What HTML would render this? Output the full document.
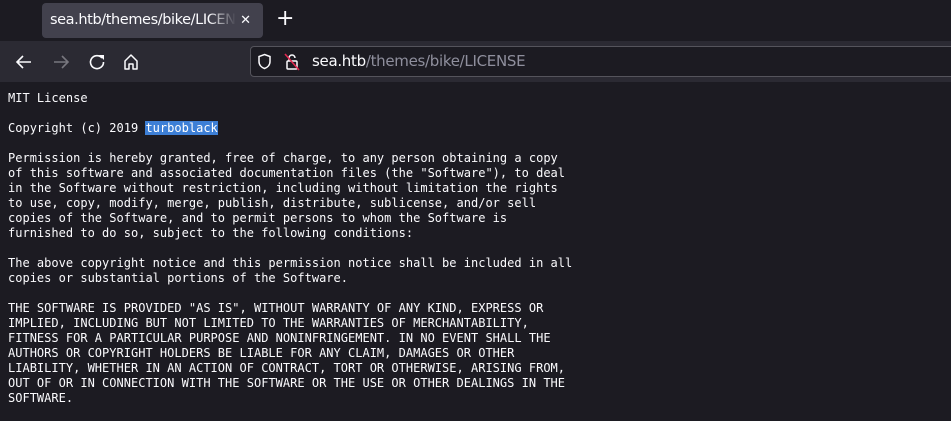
<!DOCTYPE html>
<html><head><meta charset="utf-8"><style>
*{margin:0;padding:0;box-sizing:border-box}
html,body{width:951px;height:421px;overflow:hidden;background:#1c1b22}
.tabs{position:absolute;left:0;top:0;width:951px;height:41px;background:#1c1b22}
.tab{position:absolute;left:42px;top:3px;width:221px;height:35px;background:#42414d;border-radius:4px;color:#fbfbfe;font:14.5px "DejaVu Sans","Liberation Sans",sans-serif;line-height:35px;padding-left:8px;white-space:nowrap;overflow:hidden}
.tab .t{display:inline-block;width:186px;overflow:hidden;letter-spacing:-0.4px;-webkit-mask-image:linear-gradient(to right,#000 85%,transparent)}
.tab .x{position:absolute;right:12px;top:0;color:#fbfbfe;font-size:13px}
.plus{position:absolute;left:276px;top:6px;color:#fbfbfe;font:22px "DejaVu Sans",sans-serif}
.bar{position:absolute;left:0;top:41px;width:951px;height:41px;background:#2b2a33}
.url{position:absolute;left:250px;top:46px;width:710px;height:31px;background:#1c1b22;border:1px solid #55545c;border-radius:4px}
.urltext{position:absolute;left:312px;top:52px;font:15px "DejaVu Sans","Liberation Sans",sans-serif;color:#fbfbfe;letter-spacing:-0.3px}
.urltext span{color:#8f8f9d}
svg{position:absolute}
pre{position:absolute;left:8px;top:91px;font:12.02px/15px "DejaVu Sans Mono","Liberation Mono",monospace;color:#fbfbfe}
.sel{background:#3d7fd6;color:#fff}
</style></head><body>
<div class="tabs"></div>
<div class="tab"><span class="t">sea.htb/themes/bike/LICENSE</span><span class="x">✕</span></div>
<div class="plus">+</div>
<div class="bar"></div>
<svg style="left:15px;top:54px" width="18" height="16" viewBox="0 0 18 16"><path d="M16 8H2M8 2L2 8l6 6" stroke="#fbfbfe" stroke-width="1.6" fill="none"/></svg>
<svg style="left:52px;top:54px" width="18" height="16" viewBox="0 0 18 16"><path d="M2 8h14M10 2l6 6-6 6" stroke="#78777f" stroke-width="1.6" fill="none"/></svg>
<svg style="left:88px;top:53px" width="18" height="18" viewBox="0 0 18 18"><path d="M14 5A6.5 6.5 0 1 0 15.5 9" stroke="#fbfbfe" stroke-width="1.6" fill="none"/><path d="M11 2h5v5z" fill="#fbfbfe"/></svg>
<svg style="left:123px;top:53px" width="16" height="17" viewBox="0 0 16 17"><path d="M2 8L8 2l6 6v8H10v-5H6v5H2z" stroke="#fbfbfe" stroke-width="1.5" fill="none" stroke-linejoin="round"/></svg>
<div class="url"></div>
<svg style="left:257px;top:53px" width="15" height="17" viewBox="0 0 15 17"><path d="M7.5 1.5L13 3.5v5c0 3.5-2.5 6-5.5 7-3-1-5.5-3.5-5.5-7v-5z" stroke="#fbfbfe" stroke-width="1.5" fill="none"/></svg>
<svg style="left:284px;top:53px" width="16" height="18" viewBox="0 0 16 18"><rect x="3" y="8" width="10" height="8" rx="1" stroke="#fbfbfe" stroke-width="1.5" fill="none"/><path d="M5 8V5a3 3 0 0 1 6 0" stroke="#fbfbfe" stroke-width="1.5" fill="none"/><path d="M1 1l14 16" stroke="#e22850" stroke-width="1.6"/></svg>
<div class="urltext">sea.htb<span>/themes/bike/LICENSE</span></div>
<pre>MIT License

Copyright (c) 2019 <span class="sel">turboblack</span>

Permission is hereby granted, free of charge, to any person obtaining a copy
of this software and associated documentation files (the "Software"), to deal
in the Software without restriction, including without limitation the rights
to use, copy, modify, merge, publish, distribute, sublicense, and/or sell
copies of the Software, and to permit persons to whom the Software is
furnished to do so, subject to the following conditions:

The above copyright notice and this permission notice shall be included in all
copies or substantial portions of the Software.

THE SOFTWARE IS PROVIDED "AS IS", WITHOUT WARRANTY OF ANY KIND, EXPRESS OR
IMPLIED, INCLUDING BUT NOT LIMITED TO THE WARRANTIES OF MERCHANTABILITY,
FITNESS FOR A PARTICULAR PURPOSE AND NONINFRINGEMENT. IN NO EVENT SHALL THE
AUTHORS OR COPYRIGHT HOLDERS BE LIABLE FOR ANY CLAIM, DAMAGES OR OTHER
LIABILITY, WHETHER IN AN ACTION OF CONTRACT, TORT OR OTHERWISE, ARISING FROM,
OUT OF OR IN CONNECTION WITH THE SOFTWARE OR THE USE OR OTHER DEALINGS IN THE
SOFTWARE.</pre>
</body></html>
